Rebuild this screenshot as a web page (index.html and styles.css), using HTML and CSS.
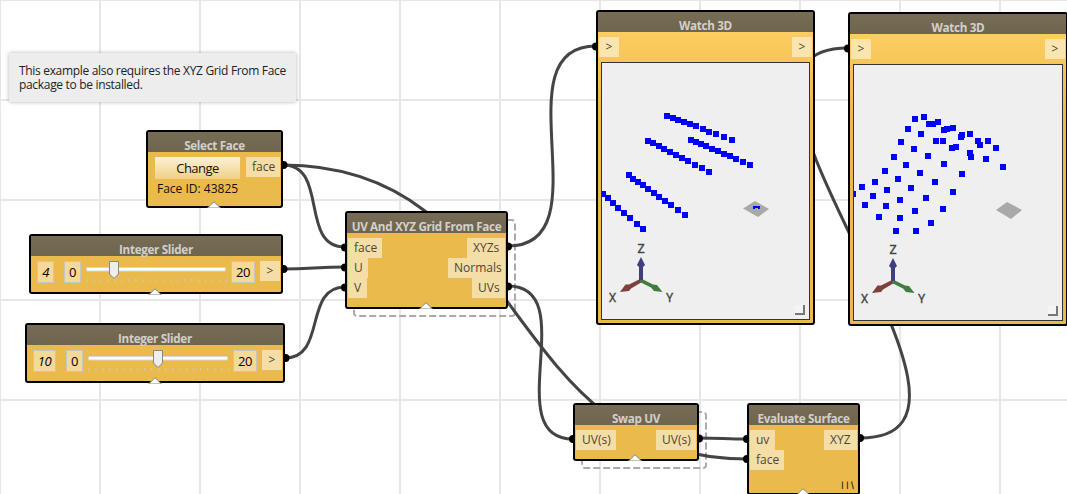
FILE: index.html
```html
<!DOCTYPE html>
<html lang="en">
<head>
<meta charset="utf-8">
<title>Graph workspace</title>
<link rel="stylesheet" href="styles.css">
</head>
<body>
<main class="workspace">
  <svg class="wires" width="1067" height="494" viewBox="0 0 1067 494">
    <g class="selection">
      <rect x="354" y="220" width="161" height="96" rx="3"/>
      <rect x="582" y="412" width="124" height="56" rx="3"/>
    </g>
    <g class="wire">
      <path d="M283 165C329 165 299 247 345 247"/>
      <path d="M283 165C530 165 500 459 747 459"/>
      <path d="M283 269C311 269 317 267 345 267"/>
      <path d="M285 358C327 358 303 287 345 287"/>
      <path d="M508 246C606 246 498 46 596 46"/>
      <path d="M508 286C583 286 498 439 573 439"/>
      <path d="M699 438C720 438 726 439 747 439"/>
      <path d="M860 438C1036 438 672 48 848 48"/>
    </g>
    <path class="dots" d="M283.500 165h0M283.500 269h0M285.500 358h0M345 247.500h0M345 267.500h0M345 287.500h0M508 246.500h0M508 286.500h0M596 46.500h0M848 48.500h0M573 439h0M699 438.500h0M747 439h0M747 459h0M860 438h0"/>
  </svg>

  <p class="note">This example also requires the XYZ Grid From Face package to be installed.</p>

  <section class="node select-face">
    <h2 class="title">Select Face</h2>
    <div class="body">
      <div class="picker"><button class="change">Change</button><span class="face-id">Face ID: 43825</span></div>
      <div class="ports out"><span class="port w34">face</span></div>
    </div>
    <svg class="tip" viewBox="0 0 14 7"><path d="M0.500 7L7 .7L13.500 7z"/></svg>
  </section>

  <section class="node slider-a">
    <h2 class="title">Integer Slider</h2>
    <div class="body">
      <span class="field current">4</span><span class="field">0</span>
      <svg class="slider" width="142" height="22" viewBox="0 0 142 22"><path class="ticks" d="M.500 19.500H142"/><rect class="track" x=".5" y="6.500" width="139" height="3.500" rx="1"/><path class="thumb" d="M23.500 .5h9v12.500l-4.500 4.500l-4.500-4.500z"/></svg>
      <span class="field">20</span>
      <div class="ports out"><span class="port arrow">&gt;</span></div>
    </div>
    <svg class="tip" viewBox="0 0 14 7"><path d="M0.500 7L7 .7L13.500 7z"/></svg>
  </section>

  <section class="node slider-b">
    <h2 class="title">Integer Slider</h2>
    <div class="body">
      <span class="field current">10</span><span class="field">0</span>
      <svg class="slider" width="142" height="22" viewBox="0 0 142 22"><path class="ticks" d="M.500 19.500H142"/><rect class="track" x=".5" y="6.500" width="139" height="3.500" rx="1"/><path class="thumb" d="M65.500 .5h9v12.500l-4.500 4.500l-4.500-4.500z"/></svg>
      <span class="field">20</span>
      <div class="ports out"><span class="port arrow">&gt;</span></div>
    </div>
    <svg class="tip" viewBox="0 0 14 7"><path d="M0.500 7L7 .7L13.500 7z"/></svg>
  </section>

  <section class="node grid-face">
    <h2 class="title">UV And XYZ Grid From Face</h2>
    <div class="body">
      <div class="ports"><span class="port w34">face</span><span class="port w20">U</span><span class="port w19">V</span></div>
      <div class="ports out"><span class="port w38">XYZs</span><span class="port w57">Normals</span><span class="port w33">UVs</span></div>
    </div>
    <svg class="tip" viewBox="0 0 14 7"><path d="M0.500 7L7 .7L13.500 7z"/></svg>
  </section>

  <section class="node watch watch-a">
    <h2 class="title">Watch 3D</h2>
    <div class="body">
      <div class="ports"><span class="port arrow">&gt;</span></div>
      <div class="ports out"><span class="port arrow">&gt;</span></div>
    </div>
    <svg class="scene" viewBox="602 63 207 256">
      <path class="plane" d="M743 208.500L755 201L769 209L758 217z"/>
      <path class="mark" d="M753 206h7v3h-2v-1h-3v1h-2z"/>
      <path class="points" d="M667 116h0M673 118h0M678 120h0M684 122h0M690 124h0M696 126h0M703 129h0M709 132h0M716 134h0M724 137h0M732 140h0M691 140h0M696 142h0M701 144h0M706 146h0M712 149h0M718 151h0M724 154h0M730 156h0M736 159h0M743 162h0M750 165h0M648 141h0M653 143h0M659 146h0M664 149h0M670 152h0M676 155h0M682 158h0M688 161h0M695 165h0M702 168h0M709 172h0M629 175h0M633 179h0M638 182h0M643 185h0M648 189h0M654 193h0M659 197h0M665 201h0M671 205h0M678 210h0M685 215h0M603 194h0M608 198h0M613 203h0M618 208h0M624 213h0M630 218h0M637 224h0M643 229h0"/>
      <g id="axes">
        <path fill="#7e3f3f" d="M640 279L642 282L631 288.500L629 291L620 292L625.500 284.500L629 284.500z"/>
        <path fill="#3f7e3f" d="M642 279L640 282L651 287.500L654 291L662.500 292L657 285L653 284.500z"/>
        <path fill="#3f3f7e" d="M639 280V267L637 265L641 257L645 265L643 267V280z"/>
        <g class="axis-names"><text x="641" y="252.500">Z</text><text x="612.500" y="301.500">X</text><text x="669.500" y="301.500">Y</text></g>
      </g>
      <g id="grip"><rect x="795" y="305" width="8.500" height="8.500" fill="#f4f4f4"/><path d="M804 305V314H795" fill="none" stroke="#777" stroke-width="2"/></g>
    </svg>
  </section>

  <section class="node watch watch-b">
    <h2 class="title">Watch 3D</h2>
    <div class="body">
      <div class="ports"><span class="port arrow">&gt;</span></div>
      <div class="ports out"><span class="port arrow">&gt;</span></div>
    </div>
    <svg class="scene" viewBox="854 65 208 255">
      <path class="plane" d="M996 210L1007 202L1022 210L1011 219z"/>
      <path class="points" d="M915 119h0M924 117h0M929 124h0M933 124h0M938 122h0M908 129h0M921 134h0M944 130h0M947 129h0M953 128h0M962 135h0M961 137h0M970 134h0M978 141h0M980 145h0M988 141h0M996 148h0M901 142h0M914 149h0M936 141h0M943 141h0M952 148h0M956 147h0M970 153h0M971 157h0M986 159h0M1003 167h0M894 157h0M906 165h0M928 156h0M944 164h0M885 171h0M920 173h0M962 174h0M898 179h0M875 182h0M935 182h0M862 187h0M887 190h0M911 188h0M953 192h0M853 194h0M873 196h0M900 200h0M926 198h0M865 205h0M886 206h0M915 211h0M943 209h0M879 217h0M900 218h0M931 223h0M896 231h0M916 231h0"/>
      <use href="#axes" x="252" y="1"/>
      <use href="#grip" x="253" y="1"/>
    </svg>
  </section>

  <section class="node swap">
    <h2 class="title">Swap UV</h2>
    <div class="body">
      <div class="ports"><span class="port w40">UV(s)</span></div>
      <div class="ports out"><span class="port w40">UV(s)</span></div>
    </div>
    <svg class="tip" viewBox="0 0 14 7"><path d="M0.500 7L7 .7L13.500 7z"/></svg>
  </section>

  <section class="node evaluate">
    <h2 class="title">Evaluate Surface</h2>
    <div class="body">
      <div class="ports"><span class="port w25">uv</span><span class="port w34">face</span></div>
      <div class="ports out"><span class="port w33">XYZ</span></div>
    </div>
    <svg class="lacing" width="14" height="9" viewBox="0 0 14 9"><path d="M1.500 .5v7.500M6.500 .5v7.500M10.500 .5l2 7.500"/></svg>
    <svg class="tip" viewBox="0 0 14 7"><path d="M0.500 7L7 .7L13.500 7z"/></svg>
  </section>
</main>
</body>
</html>
```

FILE: styles.css
```css
* { box-sizing: border-box; }

body {
  margin: 0;
  overflow: hidden;
  font-family: "Open Sans", "Noto Sans", sans-serif;
  font-size: 12px;
}

.workspace {
  position: relative;
  width: 1067px;
  height: 494px;
  overflow: hidden;
  background-color: #fff;
  background-image:
    linear-gradient(90deg, #e7e7e7 2px, transparent 2px),
    linear-gradient(#e7e7e7 2px, transparent 2px);
  background-size: 100px 100px;
  background-position: -1px -1px;
}

.wires { position: absolute; left: 0; top: 0; }
.wire path { fill: none; stroke: #444; stroke-width: 3; }
.dots { stroke: #000; stroke-width: 8; stroke-linecap: round; }
.selection rect { fill: none; stroke: #aaa; stroke-width: 2; stroke-dasharray: 7 3; }

.note {
  position: absolute;
  left: 9px;
  top: 53px;
  width: 287px;
  height: 49px;
  margin: 0;
  padding: 11px 0 0 10px;
  background: #ededed;
  box-shadow: 0 0 4px rgba(0, 0, 0, .3);
  color: #222;
  line-height: 14px;
  letter-spacing: -.32px;
}

.node {
  position: absolute;
  display: flex;
  flex-direction: column;
  border: 2px solid #000;
  border-radius: 3px;
  background: #ebba4c;
}
.select-face { left: 146px; top: 130px; width: 137px; height: 78px; }
.slider-a { left: 29px; top: 234px; width: 254px; height: 60px; }
.slider-b { left: 25px; top: 323px; width: 260px; height: 60px; }
.grid-face { left: 345px; top: 211px; width: 163px; height: 98px; }
.watch-a { left: 596px; top: 10px; width: 219px; height: 315px; }
.watch-b { left: 848px; top: 12px; width: 220px; height: 314px; }
.swap { left: 573px; top: 403px; width: 126px; height: 58px; }
.evaluate { left: 747px; top: 403px; width: 113px; height: 92px; }

.title {
  flex: none;
  height: 20px;
  margin: 0;
  padding-top: 4px;
  background: linear-gradient(#776d55, #6f654f);
  color: #d2d0cb;
  font-size: 11.700px;
  font-weight: 700;
  letter-spacing: -.34px;
  line-height: 18px;
  text-align: center;
  white-space: nowrap;
}

.body { display: flex; padding: 5px 1px 0; }
.ports { display: flex; flex-direction: column; align-items: flex-start; }
.out { align-items: flex-end; margin-left: auto; }
.port {
  height: 20px;
  padding-left: 6px;
  background: #f5dda6;
  color: #4d4637;
  line-height: 20px;
  white-space: nowrap;
}
.arrow { width: 20px; padding: 0; text-align: center; }
.w19 { width: 19px; }
.w20 { width: 20px; }
.w25 { width: 25px; }
.w33 { width: 33px; }
.w34 { width: 34px; }
.w38 { width: 38px; }
.w40 { width: 40px; }
.w57 { width: 57px; }

.tip {
  position: absolute;
  left: calc(50% - 8px);
  bottom: -2px;
  width: 14px;
  height: 7px;
}
.tip path { fill: #fff; stroke: #888; }
.slider-a .tip { left: 117px; bottom: -3px; }
.slider-b .tip { left: 121px; bottom: -3px; }

.picker { display: flex; flex-direction: column; padding-left: 6px; }
.change {
  width: 85px;
  height: 22px;
  padding: 0;
  border: 0;
  background: linear-gradient(#fdf0d6, #f1d086);
  color: #111;
  font: 13px/23px "Open Sans", sans-serif;
  letter-spacing: -.55px;
}
.face-id { padding: 1px 0 0 2px; font-size: 12px; line-height: 18px; color: #111; }

.slider-a .body, .slider-b .body { padding-left: 6px; }
.field {
  min-width: 17px;
  height: 22px;
  padding: 0 2px;
  border: 1px solid #c6c6c0;
  background: #f5d998;
  color: #000;
  font-size: 13px;
  letter-spacing: -.5px;
  line-height: 21px;
  text-align: center;
}
.current { margin-right: 10px; font-style: italic; }
.slider-b .current { width: 23px; }
.slider { margin: 0 3px 0 5px; }
.slider + .field { width: 24px; }
.track { fill: #fff; stroke: #d5d5d5; stroke-width: 1; }
.ticks { stroke: #cfcab8; stroke-width: 3; stroke-dasharray: 1 5.980; }
.thumb { fill: #eee; stroke: #878787; }

.watch { background: linear-gradient(#fccd60 20px, #ebba4c 100px); }
.watch .arrow { background: #fbe4ae; }
.scene {
  flex: none;
  width: 209px;
  height: 258px;
  margin: 5px 0 0 3px;
  border: 1px solid #333;
  background: #efefef;
}
.watch-b .scene { width: 210px; height: 257px; }
.points { stroke: #00f; stroke-width: 6; stroke-linecap: square; }
.plane { fill: #a9a9a9; }
.mark { fill: #00f; }
.axis-names { fill: #444; stroke: #444; stroke-width: .3; font: 12px Roboto, sans-serif; text-anchor: middle; }

.lacing { position: absolute; right: 3px; bottom: 3px; }
.lacing path { fill: none; stroke: #5a4a20; stroke-width: 1.300; }
```
